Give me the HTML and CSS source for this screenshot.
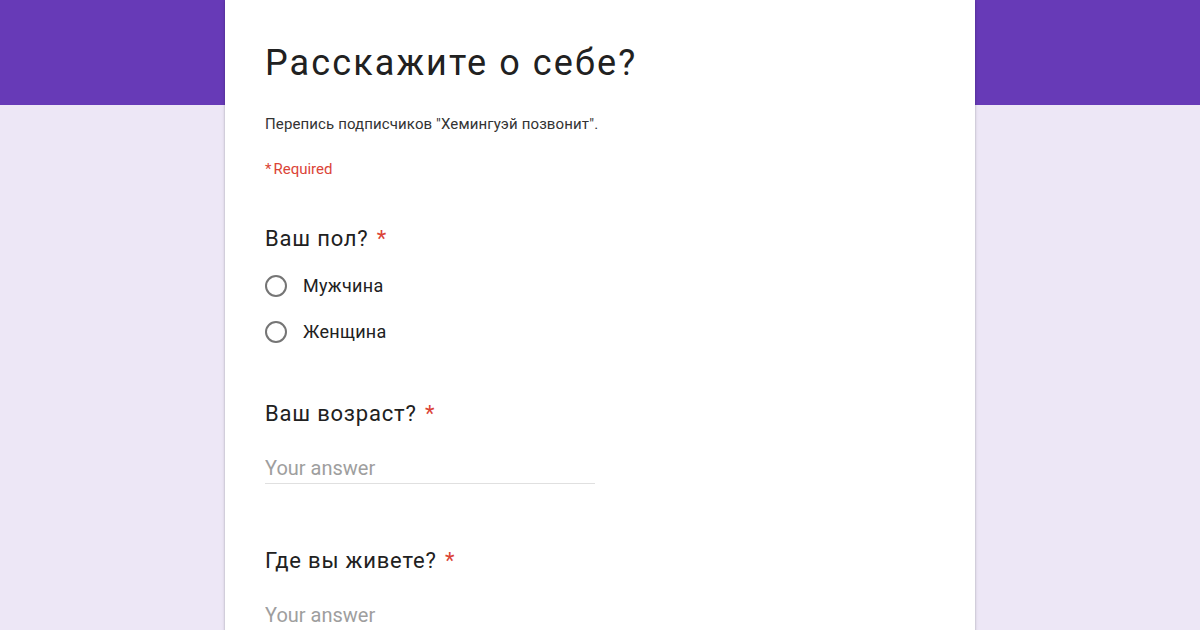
FILE: index.html
```html
<!DOCTYPE html>
<html lang="ru">
<head>
  <meta charset="UTF-8">
  <title>Расскажите о себе?</title>
  <link rel="stylesheet" href="styles.css">
</head>
<body>

<div class="form-card">
  <!-- Шапка формы -->
  <div class="form-head">
    <h1 class="form-title">Расскажите о себе?</h1>
    <p class="form-desc">Перепись подписчиков "Хемингуэй позвонит".</p>
    <p class="form-required"><span class="star">*</span>Required</p>
  </div>

  <!-- Вопрос 1 -->
  <div class="question question-radio">
    <div class="q-title">Ваш пол? <span class="star">*</span></div>
    <label class="radio-row"><span class="radio"></span>Мужчина</label>
    <label class="radio-row"><span class="radio"></span>Женщина</label>
  </div>

  <!-- Вопрос 2 -->
  <div class="question question-text">
    <div class="q-title">Ваш возраст? <span class="star">*</span></div>
    <input class="answer" type="text" placeholder="Your answer">
  </div>

  <!-- Вопрос 3 -->
  <div class="question question-text">
    <div class="q-title">Где вы живете? <span class="star">*</span></div>
    <input class="answer" type="text" placeholder="Your answer">
  </div>
</div>

</body>
</html>
```

FILE: styles.css
```css
/* Google Forms — фиолетовая тема */
body {
  margin: 0;
  font-family: Roboto, "Liberation Sans", Arial, sans-serif;
  color: #212121;
  background: linear-gradient(#673ab7 0, #673ab7 105px, #ede7f6 105px);
  min-height: 630px;
  overflow: hidden;
}
.form-card {
  width: 750px;
  min-height: 630px;
  margin: 0 auto;
  padding: 0 40px;
  box-sizing: border-box;
  background: #fff;
  box-shadow: 0 0 2px rgba(0, 0, 0, 0.2), 0 1px 4px rgba(0, 0, 0, 0.12);
}
.form-head {
  padding-top: 39px;
}
.form-title {
  margin: 0;
  font-size: 36px;
  font-weight: 400;
  line-height: 48px;
  letter-spacing: 2.1px;
  color: #212121;
}
.form-desc {
  margin: 27px 0 0;
  font-size: 15px;
  line-height: 20px;
  letter-spacing: 0.12px;
  color: #333;
}
.form-required {
  margin: 25px 0 0;
  font-size: 15px;
  line-height: 20px;
  color: #db4437;
}
.star {
  color: #db4437;
  margin-left: 2px;
}
.form-required .star {
  margin-left: 0;
  margin-right: 2px;
}
.question {
  margin-top: 46px;
}
.question-radio {
  padding-bottom: 10px;
}
.question-text {
  padding-bottom: 17px;
}
.q-title {
  font-size: 22px;
  line-height: 28px;
  letter-spacing: 0.8px;
  color: #212121;
}
.radio-row {
  display: flex;
  align-items: center;
  gap: 16px;
  margin-top: 21px;
  font-size: 18px;
  line-height: 24px;
  letter-spacing: 0.3px;
  color: #212121;
}
.radio-row + .radio-row {
  margin-top: 22px;
}
.radio {
  width: 18px;
  height: 18px;
  border: 2px solid #757575;
  border-radius: 50%;
}
.answer {
  display: block;
  width: 330px;
  margin-top: 28px;
  padding: 0 0 3px;
  border: none;
  border-bottom: 1px solid #e0e0e0;
  font-family: inherit;
  font-size: 20px;
  line-height: 24px;
  outline: none;
  background: transparent;
}
.answer::placeholder {
  color: #9e9e9e;
}
```
